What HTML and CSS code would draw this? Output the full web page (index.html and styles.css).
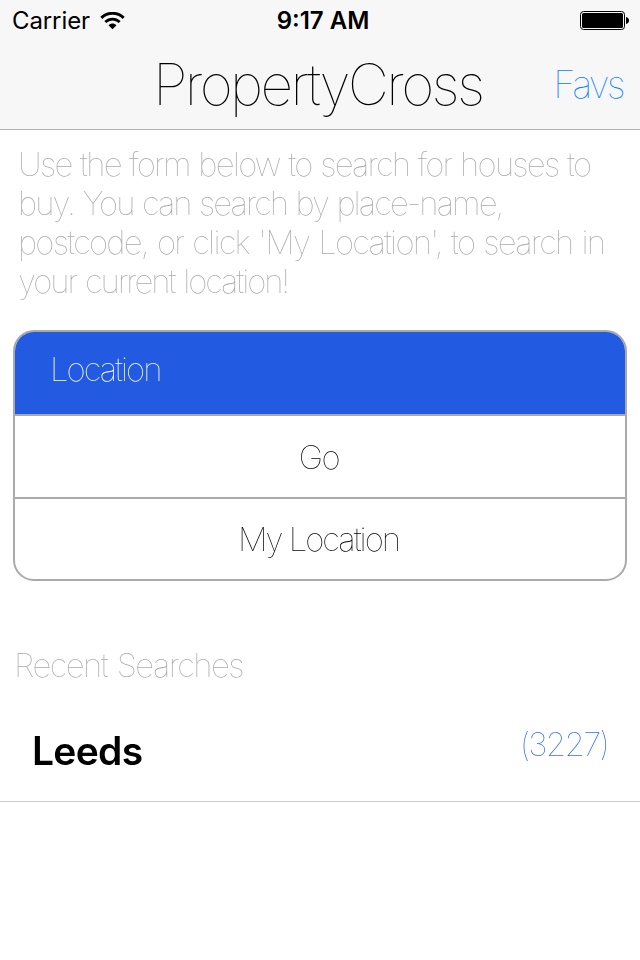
FILE: index.html
```html
<!DOCTYPE html>
<html lang="en">
<head>
<meta charset="utf-8">
<title>PropertyCross</title>
<link rel="stylesheet" href="styles.css">
</head>
<body>
<header class="header">
  <div class="status">
    <div class="carrier"><span>Carrier</span>
      <svg class="wifi" width="25" height="18" viewBox="0 0 26 19" fill="none" stroke="#000">
        <path d="M1.2 6.2C7.8-.3 18.2-.3 24.8 6.2" stroke-width="3"/>
        <path d="M5.4 10.6C9.8 6.4 16.2 6.4 20.6 10.6" stroke-width="3"/>
        <path d="M8.8 14C11.4 11.6 14.6 11.6 17.2 14L13 18.2Z" fill="#000" stroke="none"/>
      </svg>
    </div>
    <div class="time">9:17 AM</div>
    <svg class="battery" width="49" height="19" viewBox="0 0 49 19">
      <rect x=".5" y=".5" width="44" height="18" rx="3" fill="none" stroke="#000"/>
      <rect x="2" y="2" width="41" height="15" rx="1.5"/>
      <path d="M46 6c4 .5 4 6.500 0 7z"/>
    </svg>
  </div>
  <div class="nav">
    <h1 class="title">PropertyCross</h1>
    <a class="favs">Favs</a>
  </div>
</header>
<main>
  <p class="intro"><span class="l1">Use the form below to search for houses to</span><span class="l2">buy. You can search by place-name,</span><span class="l3">postcode, or click 'My Location', to search in</span><span class="l4">your current location!</span></p>
  <div class="form">
    <div class="row field"><span>Location</span></div>
    <div class="row go"><span>Go</span></div>
    <div class="row mine"><span>My Location</span></div>
  </div>
  <h2 class="recent">Recent Searches</h2>
  <div class="item"><span class="city">Leeds</span><span class="count">(3227)</span></div>
</main>
</body>
</html>
```

FILE: styles.css
```css
* { box-sizing: border-box; }
body { margin: 0; background: #fff; color: #000; font-family: Inter, "Liberation Sans", sans-serif; font-weight: 100; font-size: 33px; line-height: 39px; white-space: nowrap; }
.header, main { will-change: opacity; }
.header { height: 130px; background: #f7f7f7; border-bottom: 1px solid #b2b2b2; }
.status { height: 40px; display: grid; grid-template-columns: 1fr auto 1fr; align-items: center; padding: 0 11px 0 13px; font-size: 24px; font-weight: 400; line-height: 40px; }
.carrier { display: flex; align-items: center; gap: 10px; letter-spacing: -.1px; margin-left: -1px; padding-top: 1px; }
.carrier svg { margin-top: -1px; }
.time { padding: 1px 0 0 4px; font-weight: 600; }
.battery { justify-self: end; }
.nav { height: 89px; display: grid; grid-template-columns: 153px 1fr auto; align-items: center; padding-right: 17px; }
.title { grid-column: 2; margin: 0; font-size: 57px; font-weight: 100; line-height: 89px; letter-spacing: -2.7px; }
.favs { color: #0a7cff; font-size: 38px; letter-spacing: -2.6px; }
.intro { margin: 15px 0 0 18px; color: #aaa; }
.intro span { display: block; width: max-content; }
.intro .l1 { letter-spacing: -1.8px; word-spacing: 1.1px; }
.intro .l2 { letter-spacing: -1.95px; word-spacing: 1px; }
.intro .l3 { letter-spacing: -1.8px; word-spacing: 1.6px; }
.intro .l4 { letter-spacing: -2.1px; word-spacing: 1.8px; }
.form { margin: 29px 13px 0; height: 251px; border: 2px solid #aaa; border-radius: 21px; overflow: hidden; display: grid; grid-template-rows: 84px 83px 80px; }
.row { display: flex; align-items: center; justify-content: center; border-bottom: 2px solid #aaa; letter-spacing: -2px; }
.row:last-child { border-bottom: 0; }
.field { justify-content: flex-start; padding: 0 0 8px 35px; background: #225be2; color: #fff; }
.go { padding: 2px 2px 0 0; letter-spacing: -1.5px; }
.mine { padding: 0 3px 0 0; }
.recent { margin: 64px 0 0 14px; color: #aaa; font-size: 33px; font-weight: 100; line-height: 40px; letter-spacing: -1.6px; word-spacing: 2px; }
.item { height: 117px; border-bottom: 1px solid #ccc; display: flex; justify-content: space-between; padding: 40px 32px 0 32px; }
.city { font-size: 39px; font-weight: 600; line-height: 52px; letter-spacing: -.7px; }
.count { margin-top: -1px; color: #346aff; line-height: 40px; letter-spacing: -1.8px; }
```
